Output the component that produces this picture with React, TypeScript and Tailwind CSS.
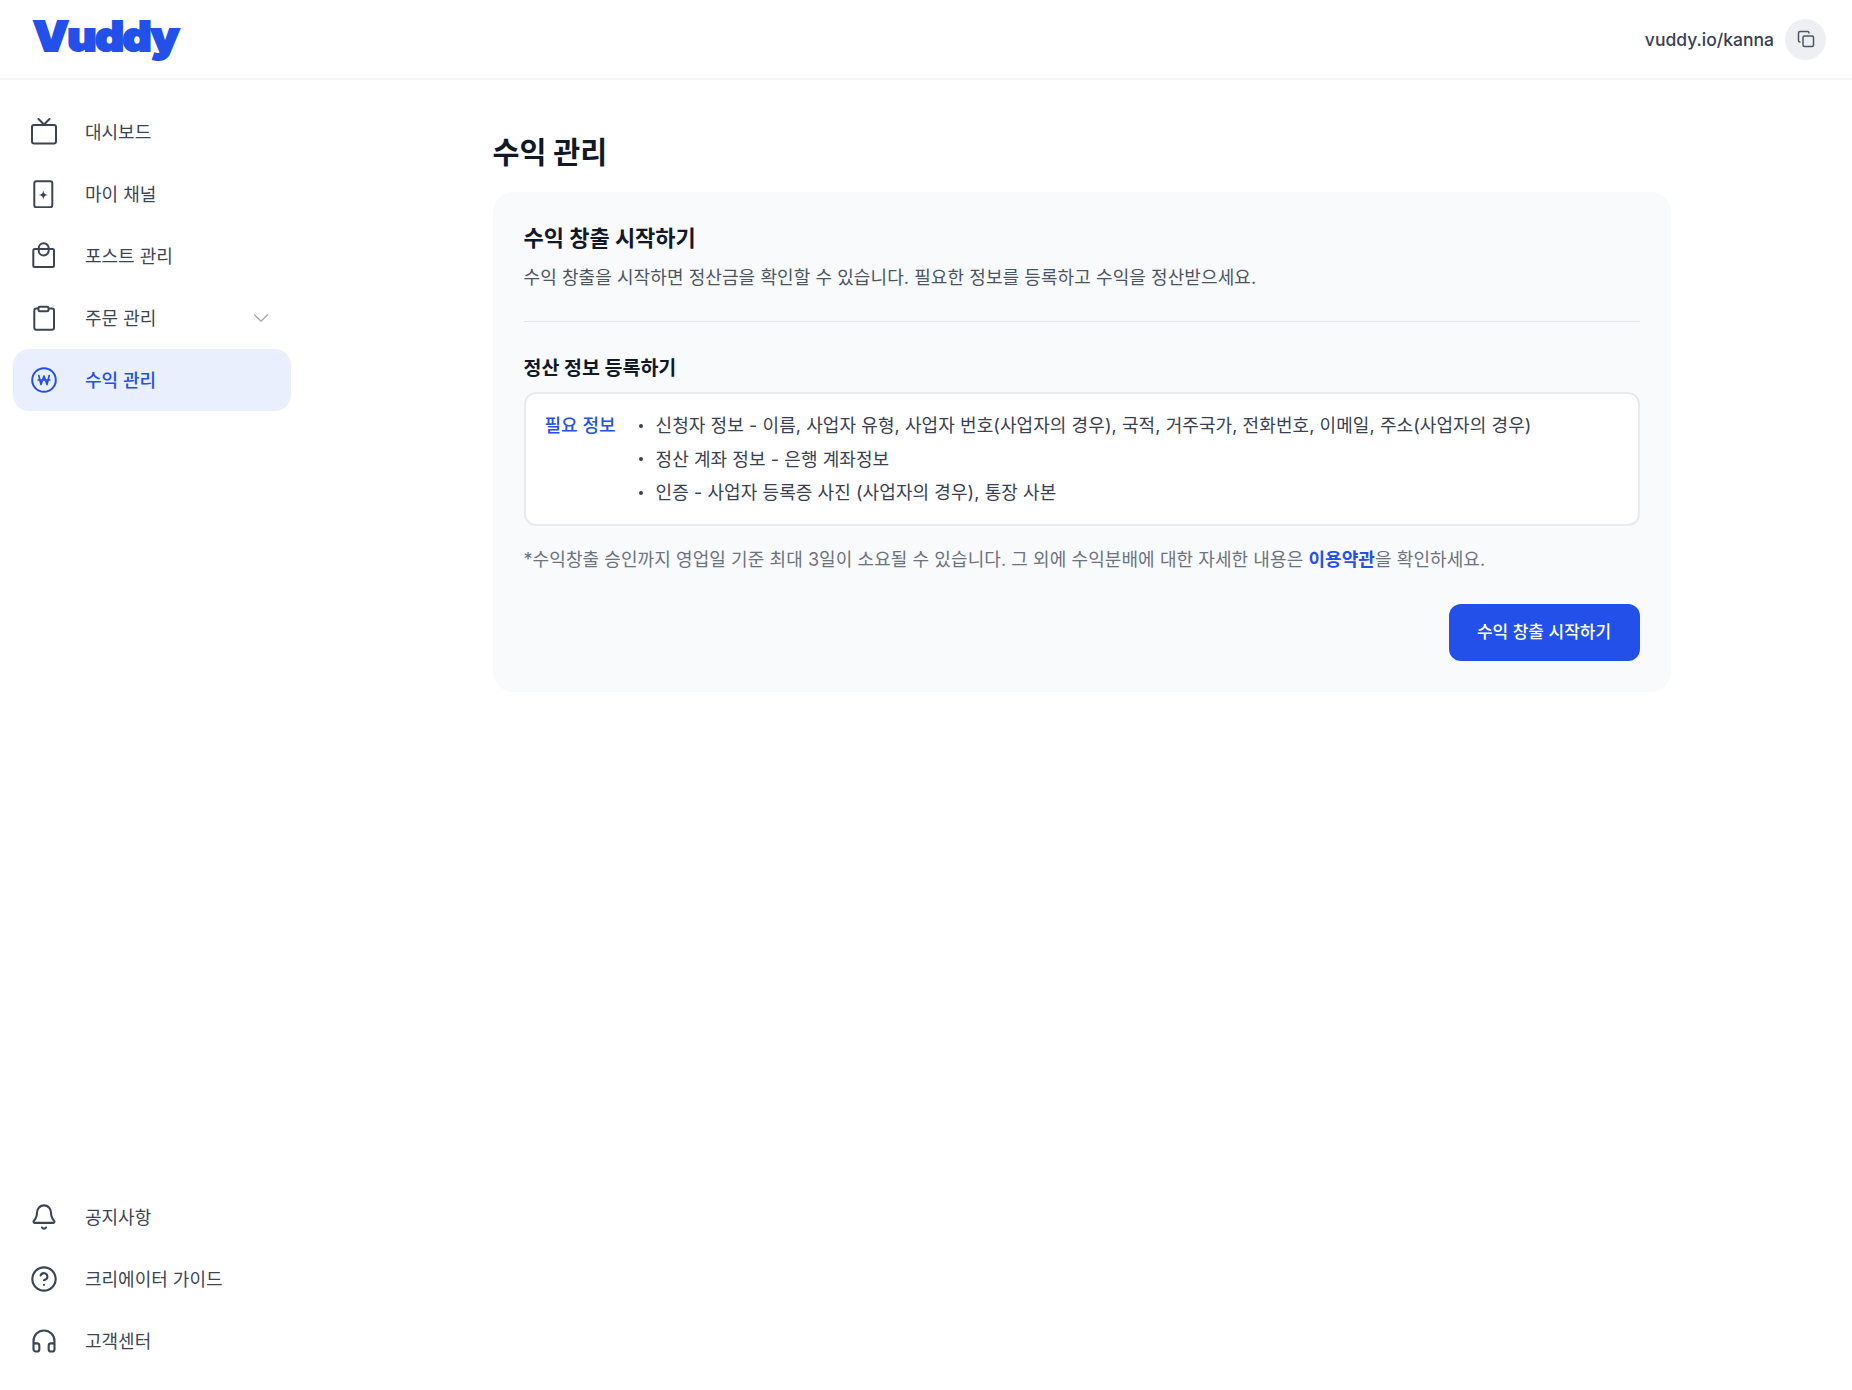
import type { ReactNode } from 'react'
import { Bell, ChevronDown, CircleHelp, Copy, Headphones } from 'lucide-react'

const font = "font-['Inter','Noto_Sans_CJK_KR',sans-serif]"

const TvIcon = () => (
  <svg width="28" height="28" viewBox="0 0 28 28" fill="none" stroke="currentColor" strokeWidth="2" strokeLinecap="round" strokeLinejoin="round">
    <rect x="2" y="7" width="24" height="18.500" rx="2" />
    <path d="M8.500 1 14 6.500 19.500 1" />
  </svg>
)

const ChannelIcon = () => (
  <svg width="28" height="28" viewBox="0 0 28 28" fill="none" stroke="currentColor" strokeWidth="2" strokeLinejoin="round">
    <rect x="4.300" y="1.300" width="18" height="26" rx="2" />
    <path d="M13.300 10.500c.5 3 1.500 4 4.500 4.500-3 .5-4 1.500-4.500 4.500-.5-3-1.500-4-4.500-4.500 3-.5 4-1.500 4.500-4.500Z" fill="currentColor" stroke="none" />
  </svg>
)

const BagIcon = () => (
  <svg width="28" height="28" viewBox="0 0 28 28" fill="none" stroke="currentColor" strokeWidth="2" strokeLinecap="round" strokeLinejoin="round">
    <rect x="3.300" y="7" width="20.700" height="18" rx="1.500" />
    <path d="M8.700 7V6.300a5 5 0 0 1 10 0V7" />
    <path d="M8.700 8.500a5 5 0 0 0 10 0" />
  </svg>
)

const ClipboardIcon = () => (
  <svg width="28" height="28" viewBox="0 0 28 28" fill="none" stroke="currentColor" strokeWidth="2" strokeLinejoin="round">
    <path d="M8.500 4.500H6.300a2 2 0 0 0-2 2v17.200a2 2 0 0 0 2 2h15.700a2 2 0 0 0 2-2V6.500a2 2 0 0 0-2-2h-3" />
    <rect x="8.500" y="2.700" width="10" height="4.500" rx="1.500" />
  </svg>
)

const WonIcon = () => (
  <svg width="28" height="28" viewBox="0 0 28 28" fill="none" stroke="currentColor" strokeWidth="2" strokeLinecap="round" strokeLinejoin="round">
    <circle cx="14" cy="14" r="11.800" />
    <path d="M8.800 9.500 11 18.500 14 10 17 18.500 19.200 9.500" strokeWidth="1.700" />
    <path d="M8 14h12" strokeWidth="1.500" />
  </svg>
)

const NavItem = ({ icon, label, active, trailing }: { icon: ReactNode; label: string; active?: boolean; trailing?: ReactNode }) => (
  <a
    className={
      active
        ? 'flex h-[62px] items-center rounded-2xl bg-[#e9effd] pl-[17px] pr-[17px] text-[#2450ea]'
        : 'flex h-[62px] items-center rounded-2xl pl-[17px] pr-[17px] text-[#3b4554]'
    }
  >
    <span className="flex w-7 shrink-0 items-center justify-center">{icon}</span>
    <span className={active ? 'ml-[27px] flex-1 text-[18px] font-medium' : 'ml-[27px] flex-1 text-[18px]'}>{label}</span>
    {trailing}
  </a>
)

const Sidebar = () => (
  <aside className="flex w-[311px] shrink-0 flex-col justify-between pb-[18px] pl-[13px] pr-5 pt-[21px]">
    <nav className="flex flex-col">
      <NavItem icon={<TvIcon />} label="대시보드" />
      <NavItem icon={<ChannelIcon />} label="마이 채널" />
      <NavItem icon={<BagIcon />} label="포스트 관리" />
      <NavItem
        icon={<ClipboardIcon />}
        label="주문 관리"
        trailing={<ChevronDown size={26} strokeWidth={1} className="text-[#9ca3af]" />}
      />
      <NavItem icon={<WonIcon />} label="수익 관리" active />
    </nav>
    <nav className="flex flex-col">
      <NavItem icon={<Bell size={28} strokeWidth={1.8} />} label="공지사항" />
      <NavItem icon={<CircleHelp size={28} strokeWidth={1.8} />} label="크리에이터 가이드" />
      <NavItem icon={<Headphones size={28} strokeWidth={1.8} />} label="고객센터" />
    </nav>
  </aside>
)

const requirements = [
  '신청자 정보 - 이름, 사업자 유형, 사업자 번호(사업자의 경우), 국적, 거주국가, 전화번호, 이메일, 주소(사업자의 경우)',
  '정산 계좌 정보 - 은행 계좌정보',
  '인증 - 사업자 등록증 사진 (사업자의 경우), 통장 사본',
]

export default function App() {
  return (
    <div className={`flex h-[1390px] flex-col bg-white ${font}`}>
      <header className="flex h-20 shrink-0 items-center justify-between border-b-2 border-[#f3f4f6] pl-[33px] pr-[26px]">
        <span className="mb-[5px] inline-block h-[37px] origin-left scale-x-[1.1] text-[41px] leading-[36px] font-black tracking-[-0.035em] text-[#2450ea] [-webkit-text-stroke:2px_#2450ea]">
          Vuddy
        </span>
        <div className="flex items-center gap-[11px]">
          <span className="mt-[3px] text-[17.500px] font-medium text-[#374151]">vuddy.io/kanna</span>
          <button type="button" className="flex h-[41px] w-[41px] items-center justify-center rounded-full bg-[#eeeff3] text-[#4b5563]">
            <Copy size={18} />
          </button>
        </div>
      </header>
      <div className="flex flex-1">
        <Sidebar />
        <main className="flex-1 pt-[51px]">
          <div className="mx-auto w-[1178px]">
            <h1 className="text-[29.300px] leading-[44px] font-bold text-[#111827]">수익 관리</h1>
            <section className="mt-[17px] rounded-[20px] bg-[#f9fafb] px-[31px] pb-[31px] pt-[30px]">
              <h2 className="text-[22px] leading-8 font-bold text-[#111827]">수익 창출 시작하기</h2>
              <p className="mt-[10px] text-[18px] leading-7 tracking-[0.08px] text-[#4b5563]">
                수익 창출을 시작하면 정산금을 확인할 수 있습니다. 필요한 정보를 등록하고 수익을 정산받으세요.
              </p>
              <hr className="mt-[29px] border-[#e5e7eb]" />
              <h3 className="mt-8 text-[19.500px] leading-7 font-bold text-[#111827]">정산 정보 등록하기</h3>
              <div className="mt-[10px] flex rounded-xl border-2 border-[#e9eaee] bg-white px-[19px] pb-[14px] pt-[15px]">
                <span className="w-[92px] shrink-0 text-[18px] leading-[34px] font-medium text-[#2450ea]">필요 정보</span>
                <ul className="flex flex-col">
                  {requirements.map((item) => (
                    <li key={item} className="flex items-center text-[18px] leading-[33.500px] tracking-[0.08px] text-[#374151]">
                      <span className="ml-[2.500px] mr-[12.500px] h-1 w-1 shrink-0 rounded-full bg-[#374151]" />
                      {item}
                    </li>
                  ))}
                </ul>
              </div>
              <p className="mt-5 text-[18px] leading-7 tracking-[0.08px] text-[#6b7280]">
                *수익창출 승인까지 영업일 기준 최대 3일이 소요될 수 있습니다. 그 외에 수익분배에 대한 자세한 내용은{' '}
                <a className="font-bold text-[#2450ea]">이용약관</a>을 확인하세요.
              </p>
              <div className="mt-[30px] flex justify-end">
                <button type="button" className="h-[57px] w-[191px] rounded-xl bg-[#2450ea] pt-px text-[17px] font-medium text-white">
                  수익 창출 시작하기
                </button>
              </div>
            </section>
          </div>
        </main>
      </div>
    </div>
  )
}
